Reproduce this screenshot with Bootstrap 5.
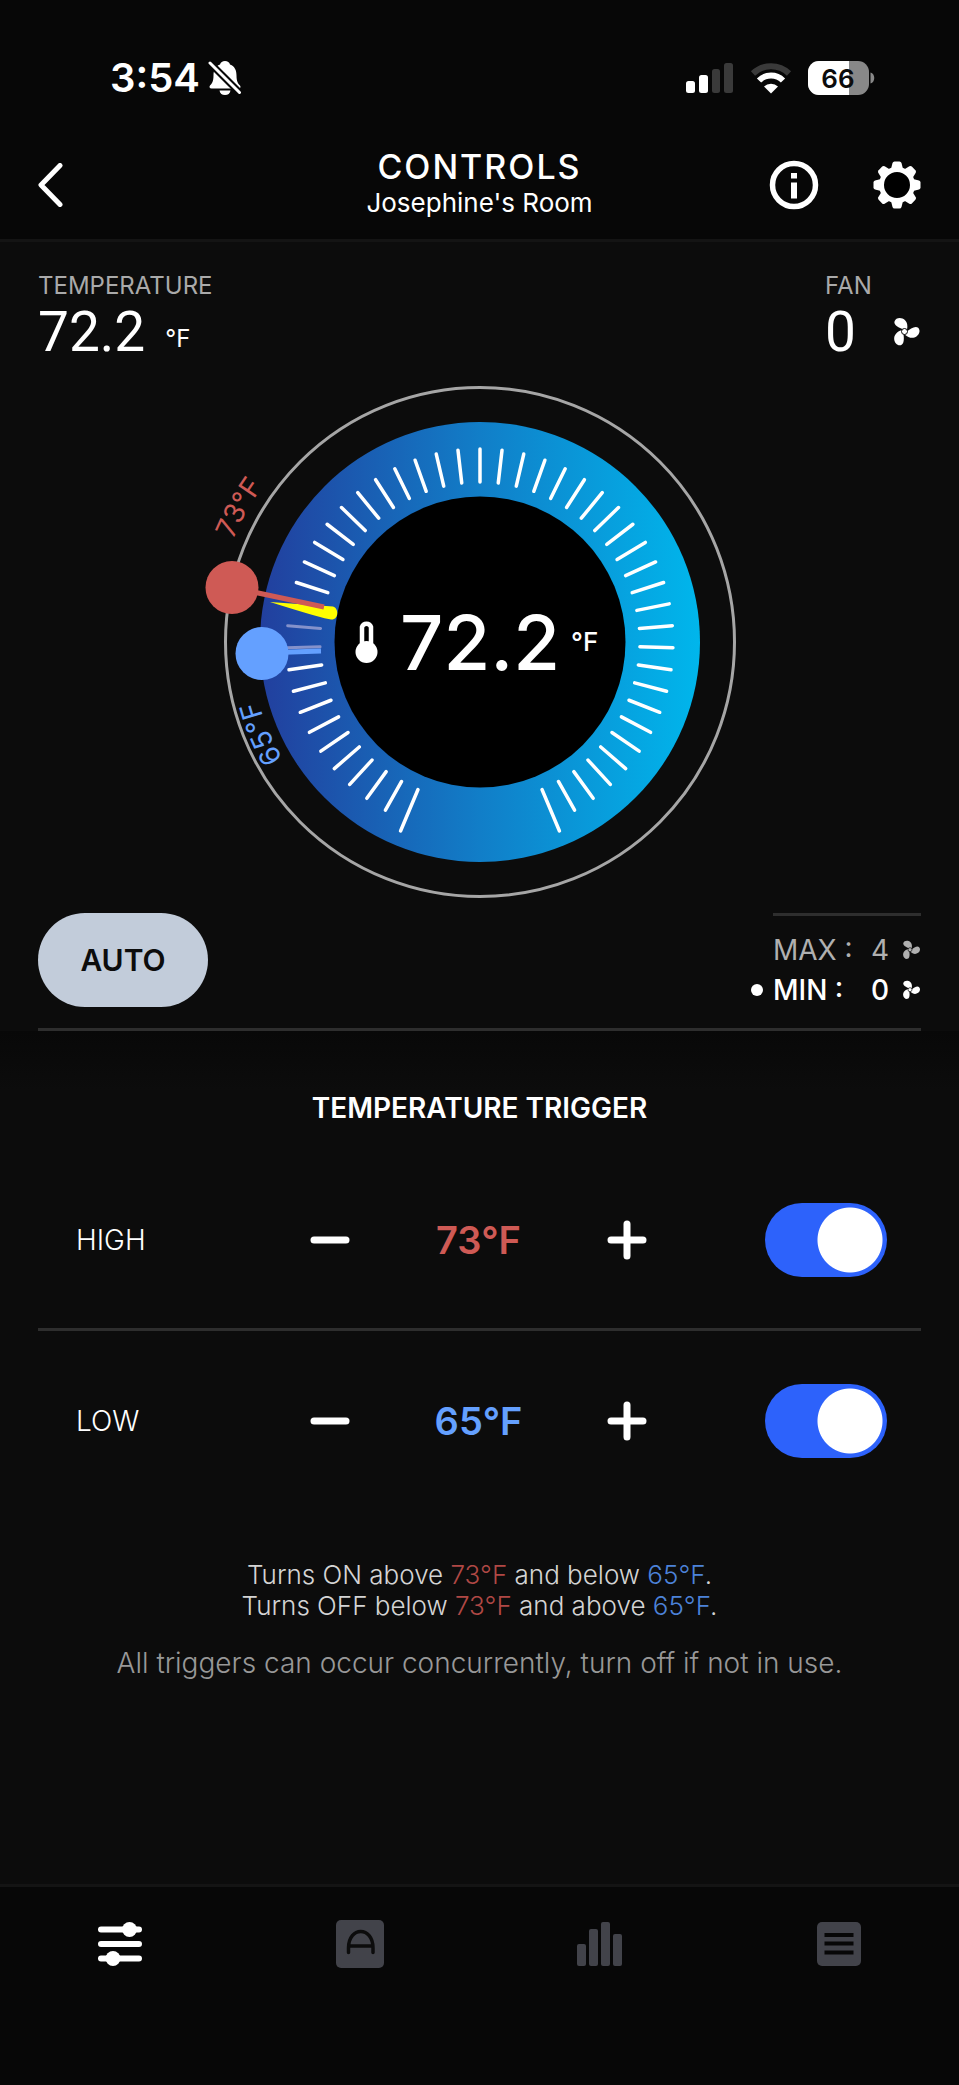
<!DOCTYPE html>
<html lang="en" data-bs-theme="dark">
<head>
<meta charset="utf-8">
<meta name="viewport" content="width=device-width, initial-scale=1">
<title>Controls</title>
<link href="https://cdn.jsdelivr.net/npm/bootstrap@5.3.0/dist/css/bootstrap.min.css" rel="stylesheet">
<style>
  :root { --hot: #cf5a55; --cool: #64a0ff; --panel: #0c0c0c; --bar: #070707; --rule: #2e2e2e; }
  body { background: var(--panel); color: #fff; font-family: Inter, "Liberation Sans", sans-serif; font-size: 28px; line-height: 32px; }
  svg { display: block; flex: none; }
  .topbar { background: var(--bar); border-bottom: 3px solid #141414; }
  .status { height: 116px; padding: 40px 84px 0 110px; }
  .clock { font-size: 40px; line-height: 76px; font-weight: 600; }
  .titlebar { height: 123px; padding: 15px 38px 0; display: grid; grid-template-columns: 1fr auto 1fr; align-items: center; }
  .titlebar h1 { font-size: 34px; line-height: 36px; font-weight: 500; letter-spacing: 2px; margin: 0; }
  .titlebar p { font-size: 26px; line-height: 36px; margin: 0; }
  .title-actions { gap: 54px; }
  .plain { background: none; border: 0; padding: 0; color: inherit; }
  .gutter { padding-left: 38px; padding-right: 38px; }
  .cap-label { font-size: 24px; line-height: 32px; color: #aaa; }
  .big-num { font-family: Roboto, Inter, sans-serif; font-size: 55px; line-height: 60px; }
  .unit { font-size: 24px; line-height: 46px; }
  .reading { gap: 20px; }
  .fan-reading { gap: 35px; }
  .auto-btn { width: 170px; height: 94px; border-radius: 47px; background: #c2ccda; color: #0c0c0c; font-size: 30px; font-weight: 600; border: 0; }
  .mode-row { padding: 15px 0 18px; }
  .limits { border-top: 3px solid var(--rule); width: 148px; padding-top: 14px; line-height: 40px; font-size: 28px; }
  .limits .dim { color: #b0b0b0; }
  .limits .active { position: relative; font-weight: 500; }
  .limits .active::before { content: ""; position: absolute; left: -22px; top: 14px; width: 12px; height: 12px; border-radius: 50%; background: #fff; }
  .limits .level { margin-left: auto; margin-right: 12px; }
  .rule { border-bottom: 3px solid var(--rule); }
  .triggers { background: linear-gradient(#080808, var(--panel) 60px); }
  .triggers h2 { font-size: 28px; line-height: 32px; font-weight: 600; margin: 0; padding: 61px 0 27px; text-align: center; }
  .trigger-row { height: 180px; padding: 0 34px 0 38px; font-weight: 300; display: grid; grid-template-columns: 234px 40px 1fr 40px 240px; align-items: center; }
  .trigger-row output { font-size: 38px; line-height: 48px; font-weight: 600; text-align: center; padding: 0; }
  .hot { color: var(--hot); } .cool { color: var(--cool); }
  .toggle.form-check-input { width: 122px; height: 74px; margin: 0; border: 0; border-radius: 37px; justify-self: end; background-color: #444;
    background-image: radial-gradient(circle, #fff 32px, transparent 33px); background-size: 74px 74px; background-repeat: no-repeat; background-position: left center; float: none; }
  .toggle.form-check-input:checked { background-color: #2d62fb; background-position: right center; }
  .notes { font-weight: 300; font-size: 26px; line-height: 31px; color: #d4d4d4; padding-top: 48px; }
  .notes .hot { color: #b04845; } .notes .cool { color: #4c82d8; }
  .notes .hint { color: #989898; font-size: 28px; line-height: 32px; padding-top: 26px; margin: 0; }
  .tabs { background: var(--bar); border-top: 3px solid #141414; height: 201px; padding-top: 33px; color: #42434a; }
  .tabs a { color: inherit; display: flex; justify-content: center; }
  .tabs a.current { color: #fff; }
  .dial { width: 560px; max-width: 100%; margin: 0 auto; }
</style>
</head>
<body>
<svg width="0" height="0" class="position-absolute" aria-hidden="true">
  <symbol id="fan" viewBox="0 0 30 30">
    <path id="blade" fill="currentColor" d="M12.500 12.500C8 11 2.500 8 3.500 4.500C4.500 1 8.500.3 11.500 1.500C16 3.500 17 8 16 12.500Z"/>
    <use href="#blade" transform="rotate(120 13.500 14.500)"/>
    <use href="#blade" transform="rotate(240 13.500 14.500)"/>
    <circle cx="13.500" cy="14.500" r="3" fill="currentColor" stroke="#0c0c0c"/>
  </symbol>
</svg>
<div class="d-flex flex-column min-vh-100">
  <header class="topbar">
    <div class="status d-flex justify-content-between align-items-center">
      <div class="d-flex align-items-center gap-2">
        <span class="clock">3:54</span>
        <svg width="34" height="36" viewBox="0 0 34 36" aria-label="Silent"><path fill="#fff" d="M17 1c2.500 0 4.500 1.500 5 3.500 5 2 6.500 6 6.500 11 0 6 1.500 8 3.500 10 1 1.500.5 3-1.500 3H3.500c-2 0-2.500-1.500-1.500-3 2-2 3.500-4 3.500-10 0-5 1.500-9 6.500-11C12.500 2.500 14.500 1 17 1ZM11.500 30.500h11c-.5 3-2.500 4.500-5.500 4.500s-5-1.500-5.500-4.500Z"/><path stroke="#070707" stroke-width="7" d="M0 1 33 34"/><path stroke="#fff" stroke-width="3" stroke-linecap="round" d="M2 3 31.500 32.500"/></svg>
      </div>
      <div class="d-flex align-items-center">
        <svg width="48" height="32" viewBox="0 0 48 32" aria-label="Signal"><g fill="#fff"><rect y="19" width="9" height="12" rx="2.500"/><rect x="13" y="13" width="9" height="18" rx="2.500"/></g><g fill="#3a3a3a"><rect x="26" y="7" width="8" height="24" rx="2.500"/><rect x="38" y="1" width="9" height="30" rx="2.500"/></g></svg>
        <svg class="ms-3" width="42" height="32" viewBox="0 0 42 32" aria-label="Wi-Fi"><g fill="none" stroke-width="6"><path stroke="#3a3a3a" d="M3 11.500a26 26 0 0 1 36 0"/><path stroke="#fff" d="M9 18.500a17 17 0 0 1 24 0"/></g><path fill="#fff" d="M14 24.500a10 10 0 0 1 14 0L21 31.500Z"/></svg>
        <svg class="ms-3" width="67" height="34" viewBox="0 0 67 34" aria-label="Battery 66 percent"><defs><clipPath id="cell"><rect width="61" height="34" rx="11"/></clipPath></defs><g clip-path="url(#cell)"><rect width="61" height="34" fill="#888"/><rect width="41" height="34" fill="#fff"/></g><path fill="#888" d="M62.500 11.500c5 1 5 10 0 11Z"/><text x="30" y="26.500" text-anchor="middle" font-size="26" font-weight="600" fill="#0c0c0c">66</text></svg>
      </div>
    </div>
    <div class="titlebar">
      <button class="plain text-start" aria-label="Back"><svg width="25" height="44" viewBox="0 0 25 44"><path d="M22 2.500 3 22 22 41.500" fill="none" stroke="#fff" stroke-width="5" stroke-linecap="round" stroke-linejoin="round"/></svg></button>
      <div class="text-center"><h1>CONTROLS</h1><p>Josephine's Room</p></div>
      <div class="title-actions d-flex justify-content-end">
        <button class="plain" aria-label="Information"><svg width="50" height="50" viewBox="0 0 50 50"><circle cx="25" cy="25" r="21.500" fill="none" stroke="#fff" stroke-width="5.500"/><path fill="#fff" d="M22 13h6v5.500h-6zM22 22.500h6v16h-6z"/></svg></button>
        <button class="plain" aria-label="Settings"><svg width="48" height="48" viewBox="-24 -24 48 48"><g fill="#fff"><path id="tooth" d="M-6-16-4.500-22Q-4-23.500-2.500-23.500H2.500Q4-23.500 4.500-22L6-16Z"/><use href="#tooth" transform="rotate(45)"/><use href="#tooth" transform="rotate(90)"/><use href="#tooth" transform="rotate(135)"/><use href="#tooth" transform="rotate(180)"/><use href="#tooth" transform="rotate(225)"/><use href="#tooth" transform="rotate(270)"/><use href="#tooth" transform="rotate(315)"/></g><circle r="15.500" fill="#000" stroke="#fff" stroke-width="5"/></svg></button>
      </div>
    </div>
  </header>

  <main>
    <section class="gutter d-flex justify-content-between pt-4">
      <div class="pt-1">
        <div class="cap-label">TEMPERATURE</div>
        <div class="reading d-flex align-items-end"><span class="big-num">72.2</span><span class="unit">°F</span></div>
      </div>
      <div class="pt-1">
        <div class="cap-label">FAN</div>
        <div class="fan-reading d-flex align-items-center"><span class="big-num">0</span><svg width="30" height="30"><use href="#fan"/></svg></div>
      </div>
    </section>

    <svg class="dial mt-4" viewBox="-280 -256 560 512" role="img" aria-label="Temperature 72.2 degrees Fahrenheit">
      <defs>
        <linearGradient id="sweep"><stop offset="0" stop-color="#223f9e"/><stop offset=".5" stop-color="#117ec8"/><stop offset="1" stop-color="#00b6ec"/></linearGradient>
        <path id="outerArc" d="M-189 189A267 267 0 0 1 0-267"/>
        <path id="innerArc" d="M-162 162A229 229 0 0 1 0-229"/>
      </defs>
      <circle r="254.500" fill="none" stroke="#a6a6a6" stroke-width="3"/>
      <circle r="220" fill="url(#sweep)"/>
      <circle r="145.500" fill="#000"/>
      <g id="ticks" stroke="#fff" stroke-width="3.500" stroke-linecap="round"></g>
      <path fill="#ff0" d="M-210-40-147-35.500C-141-34-141-22-149-22.500Q-156-23-210-40Z"/>
      <path stroke="#cf5a55" stroke-width="5" d="M-248-54.500-156-35"/>
      <circle cx="-248" cy="-54.500" r="26.500" fill="#cf5a55"/>
      <path stroke="#64a0ff" stroke-width="5" d="M-218 11-159 9"/>
      <circle cx="-218" cy="11.500" r="26.500" fill="#64a0ff"/>
      <g font-size="28" text-anchor="middle">
        <text fill="#cf5a55"><textPath href="#outerArc" startOffset="346">73°F</textPath></text>
        <text fill="#64a0ff"><textPath href="#innerArc" startOffset="89">65°F</textPath></text>
      </g>
      <g fill="#fff"><circle cx="-113.500" cy="10" r="11"/><path fill="none" stroke="#fff" stroke-width="4.500" d="M-118 4V-15a4.700 4.700 0 0 1 9 0V4"/></g>
      <text x="-80" y="28" font-size="76" font-weight="500" fill="#fff">72.2</text>
      <text x="91" y="9" font-size="26" font-weight="500" fill="#fff">°F</text>
    </svg>

    <section class="gutter">
      <div class="mode-row rule d-flex justify-content-between align-items-start">
        <button class="auto-btn">AUTO</button>
        <div class="limits">
          <div class="dim d-flex align-items-center"><span>MAX :</span><span class="level">4</span><svg width="20" height="20"><use href="#fan"/></svg></div>
          <div class="active d-flex align-items-center"><span>MIN :</span><span class="level">0</span><svg width="20" height="20"><use href="#fan"/></svg></div>
        </div>
      </div>
    </section>

    <section class="triggers gutter">
      <h2>TEMPERATURE TRIGGER</h2>
      <div class="trigger-row rule">
        <label for="high">HIGH</label>
        <button class="plain" aria-label="Lower high trigger"><svg width="40" height="40"><path stroke="#fff" stroke-width="7" stroke-linecap="round" d="M4 20H36"/></svg></button>
        <output class="hot">73°F</output>
        <button class="plain" aria-label="Raise high trigger"><svg width="40" height="40"><path stroke="#fff" stroke-width="7" stroke-linecap="round" d="M4 20H36M20 4V36"/></svg></button>
        <input class="form-check-input toggle" type="checkbox" role="switch" id="high" checked>
      </div>
      <div class="trigger-row">
        <label for="low">LOW</label>
        <button class="plain" aria-label="Lower low trigger"><svg width="40" height="40"><path stroke="#fff" stroke-width="7" stroke-linecap="round" d="M4 20H36"/></svg></button>
        <output class="cool">65°F</output>
        <button class="plain" aria-label="Raise low trigger"><svg width="40" height="40"><path stroke="#fff" stroke-width="7" stroke-linecap="round" d="M4 20H36M20 4V36"/></svg></button>
        <input class="form-check-input toggle" type="checkbox" role="switch" id="low" checked>
      </div>
      <div class="notes text-center">
        <div>Turns ON above <span class="hot">73°F</span> and below <span class="cool">65°F</span>.</div>
        <div>Turns OFF below <span class="hot">73°F</span> and above <span class="cool">65°F</span>.</div>
        <p class="hint">All triggers can occur concurrently, turn off if not in use.</p>
      </div>
    </section>
  </main>

  <nav class="tabs mt-auto" aria-label="Main">
    <div class="row g-0">
      <div class="col"><a class="current" href="#controls" aria-label="Controls"><svg width="48" height="48" viewBox="0 0 48 48"><path stroke="currentColor" stroke-width="6" stroke-linecap="round" d="M5 9.500H43M5 24H43M5 38.500H43"/><circle cx="33.500" cy="9.500" r="7.500" fill="currentColor"/><circle cx="17" cy="38.500" r="7.500" fill="currentColor"/></svg></a></div>
      <div class="col"><a href="#auto" aria-label="Automation"><svg width="48" height="48" viewBox="0 0 48 48"><rect width="48" height="48" rx="5" fill="currentColor"/><path fill="none" stroke="#0c0c0c" stroke-width="3.500" stroke-linecap="round" d="M12.500 32.500V28C12.500 6 37 6 37 28V32.500M13 26H37"/></svg></a></div>
      <div class="col"><a href="#history" aria-label="History"><svg width="48" height="48" viewBox="0 0 48 48"><g fill="currentColor"><rect x="2" y="24" width="9" height="22" rx="2"/><rect x="14" y="9" width="9" height="37" rx="2"/><rect x="26" y="2" width="9" height="44" rx="2"/><rect x="38" y="14" width="9" height="32" rx="2"/></g></svg></a></div>
      <div class="col"><a href="#logs" aria-label="Logs"><svg width="48" height="48" viewBox="0 0 48 48"><rect x="2" y="2" width="44" height="44" rx="5" fill="currentColor"/><path stroke="#070707" stroke-width="4" d="M9.500 15H38.500M9.500 23.500H38.500M9.500 32.500H38.500"/></svg></a></div>
    </div>
  </nav>
</div>
<script src="https://cdn.jsdelivr.net/npm/bootstrap@5.3.0/dist/js/bootstrap.bundle.min.js"></script>
<script>
  const ticks = document.getElementById('ticks');
  for (let i = -24; i <= 24; i++) {
    if (i === -12) continue; // the needle covers this mark
    const dim = i === -13 || i === -14;
    const line = document.createElementNS('http://www.w3.org/2000/svg', 'line');
    line.setAttribute('y1', -160);
    line.setAttribute('y2', Math.abs(i) === 24 ? -205 : -193);
    line.setAttribute('transform', `rotate(${i * 6.55})`);
    if (dim) { line.setAttribute('stroke', '#8592cb'); line.setAttribute('stroke-width', 3); }
    ticks.append(line);
  }
</script>
</body>
</html>
